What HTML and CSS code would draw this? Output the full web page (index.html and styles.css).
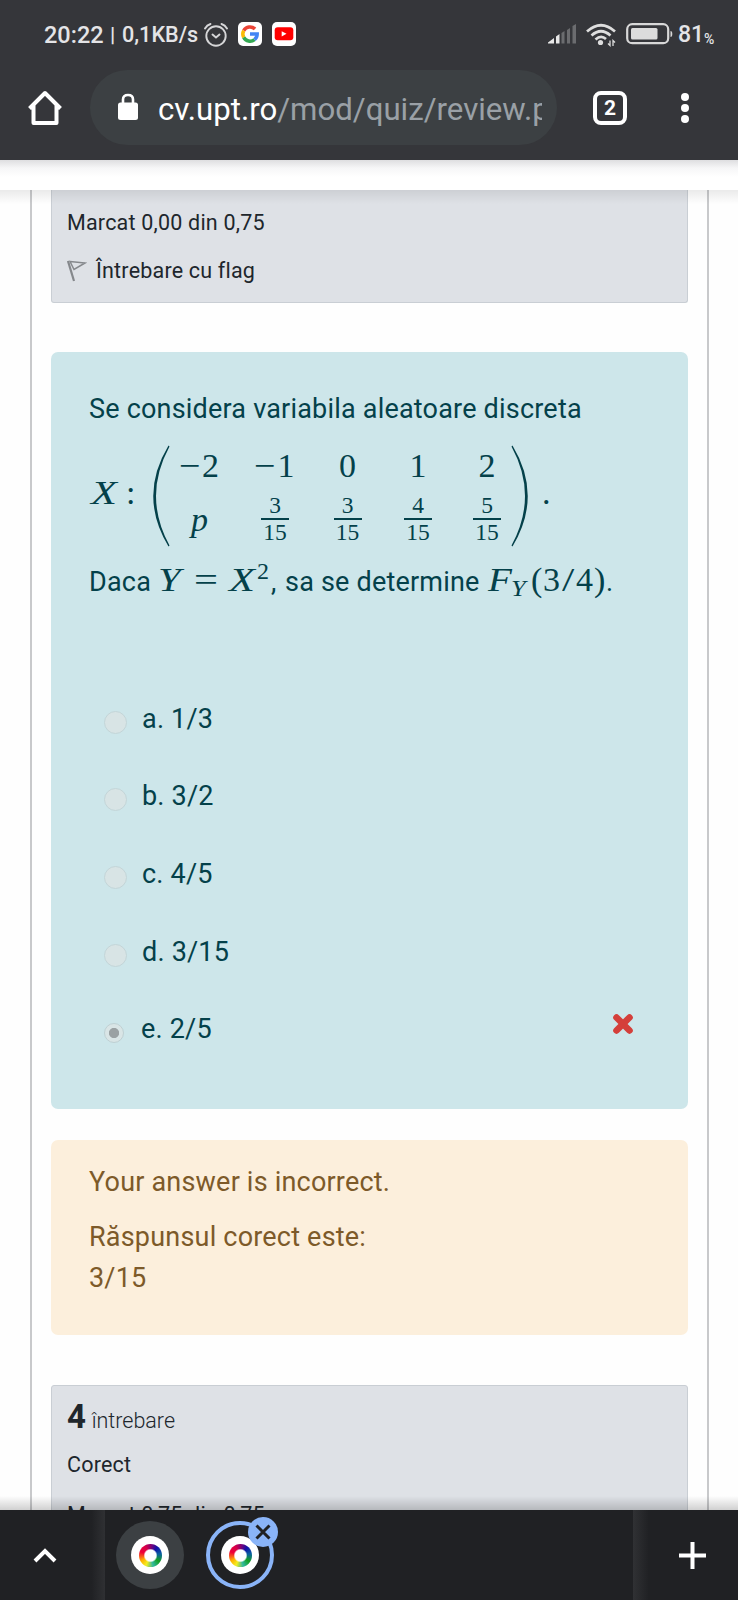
FILE: index.html
```
<!DOCTYPE html>
<html lang="ro">
<head>
<meta charset="utf-8">
<title>Quiz review</title>
<link rel="stylesheet" href="styles.css">
</head>
<body>
<div class="screen">
  <header class="chrome">
    <div class="status">
      <span class="clock">20:22</span><span class="sep">|</span><span class="speed">0,1KB/s</span>
      <svg class="alarm" width="24" height="26" viewBox="0 0 24 26" fill="none" stroke="#d6d6d8" stroke-width="1.9" stroke-linecap="round"><circle cx="12" cy="14" r="9.7"/><path d="M1 6.5Q3 3 6.500 2M23 6.500Q21 3 17.500 2M8.500 12.500L12 15.500L15.500 12.500"/></svg>
      <svg class="google" width="24" height="24" viewBox="0 0 24 24"><rect width="24" height="24" rx="5" fill="#fff"/><g fill="none" stroke-width="3.500"><path d="M5.700 8.600A7.200 7.200 0 0 1 17 7" stroke="#ea4335"/><path d="M5.700 15.400A7.200 7.200 0 0 1 5.700 8.600" stroke="#fbbc05"/><path d="M16.500 17.600A7.200 7.200 0 0 1 5.700 15.400" stroke="#34a853"/><path d="M12 12H19.200A7.200 7.200 0 0 1 16.500 17.600" stroke="#4285f4"/></g></svg>
      <svg class="youtube" width="24" height="24" viewBox="0 0 24 24"><rect width="24" height="24" rx="5" fill="#fff"/><rect x="2.700" y="5.300" width="18.600" height="13" rx="3" fill="#f00"/><path d="M9.700 9.200V14.400L14.500 11.800Z" fill="#fff"/></svg>
      <svg class="signal" width="29" height="20" viewBox="0 0 29 20"><path d="M0 19.500V18.500L6 14V19.500Z M8 19.500V12.500L11.500 10V19.500Z" fill="#e8e8e8"/><path d="M13.500 19.500V9L16.500 7V19.500Z M19 19.500V6L22 4V19.500Z M24.500 19.500V2L28 0V19.500Z" fill="#6b6c6f"/></svg>
      <svg class="wifi" width="30" height="24" viewBox="0 0 30 24" fill="none" stroke="#dedede" stroke-width="2.700"><path d="M1 8.500Q15 -4 29 8.500M5.500 12.500Q15 4 24.500 12.500M9.500 16.500Q15 11.500 20 16"/><circle cx="14.500" cy="19.500" r="2.600" fill="#dedede" stroke="none"/><path d="M24 17.500V22.500L22 20.500M27 23V17.500L29 19.500" stroke-width="1.300"/></svg>
      <svg class="battery" width="47" height="22" viewBox="0 0 47 22"><rect x="1.200" y="1.200" width="41" height="19" rx="5" fill="none" stroke="#d8d8d8" stroke-width="2.200"/><rect x="5" y="5" width="26.500" height="11.500" rx="1.500" fill="#dcdcdc"/><path d="M44.500 8Q46.300 8 46.300 11T44.500 14Z" fill="#d8d8d8"/></svg>
      <span class="level">81</span><span class="pct">%</span>
    </div>
    <div class="toolbar">
      <svg class="home" width="36" height="36" viewBox="0 0 36 36" fill="none" stroke="#fff" stroke-width="4" stroke-linejoin="round"><path d="M2.500 18.500L18 3L33.500 18.500M6.500 15.500V33H29.500V15.500"/></svg>
      <div class="omnibox">
        <svg width="20" height="28" viewBox="0 0 20 28"><rect y="9.500" width="20" height="17.500" rx="2.500" fill="#fff"/><path d="M5 11V6.500Q5 2 10 2T15 6.500V11" fill="none" stroke="#fff" stroke-width="2.600"/></svg>
        <div class="url">cv.upt.ro<span>/mod/quiz/review.p</span></div>
      </div>
      <div class="tabs">2</div>
      <div class="menu"><i></i><i></i><i></i></div>
    </div>
  </header>
  <div class="topstrip"></div>
  <main class="viewport">
    <div class="frame">
      <section class="info first">
        <p>Marcat 0,00 din 0,75</p>
        <p class="flagrow"><svg width="20" height="22" viewBox="0 0 20 22" fill="none" stroke="#85888c"><path d="M1 1L7 21" stroke-width="2.200"/><path d="M3 1.500L18 3L7 9.500Z" stroke-width="1.500"/></svg>Întrebare cu flag</p>
      </section>
      <section class="question">
        <p class="lead">Se considera variabila aleatoare discreta</p>
        <div class="formula">
          <span class="wide v">X</span><span class="colon">:</span>
          <svg class="paren" width="18" height="102" viewBox="0 0 18 102"><path d="M16.500 .5Q-14 51 16.500 101.500L17.500 100.500Q-9.500 51 17.500 1.500Z" fill="#04414a"/></svg>
          <div class="matrix">
            <span><b class="minus">−</b>2</span><span><b class="minus">−</b>1</span><span>0</span><span>1</span><span>2</span>
            <span class="v p">p</span>
            <span class="frac"><b>3</b><b>15</b></span><span class="frac"><b>3</b><b>15</b></span><span class="frac"><b>4</b><b>15</b></span><span class="frac"><b>5</b><b>15</b></span>
          </div>
          <svg class="paren" width="18" height="102" viewBox="0 0 18 102"><path d="M1.500 .5Q32 51 1.500 101.500L.5 100.500Q27.500 51 .5 1.500Z" fill="#04414a"/></svg>
          <span class="stop">.</span>
        </div>
        <div class="then">
          <span class="t daca">Daca</span><span class="m v y">Y</span><span class="m eq">=</span><span class="m v x">X</span><span class="m sup">2</span><span class="t comma">,</span><span class="t det">sa se determine</span><span class="m v f">F</span><span class="m v sub">Y</span><span class="m lp">(</span><span class="m three">3</span><span class="m sl">/</span><span class="m four">4</span><span class="m rp">)</span><span class="t end">.</span>
        </div>
        <ul class="answers">
          <li><i></i>a. 1/3</li>
          <li><i></i>b. 3/2</li>
          <li><i></i>c. 4/5</li>
          <li><i></i>d. 3/15</li>
          <li class="chosen"><i></i>e. 2/5<svg width="20" height="20" viewBox="0 0 20 20"><path d="M3.500 3.500L16.500 16.500M16.500 3.500L3.500 16.500" stroke="#d43f3a" stroke-width="6.600" stroke-linecap="round"/></svg></li>
        </ul>
      </section>
      <section class="feedback">
        <p>Your answer is incorrect.</p>
        <p class="right">Răspunsul corect este:<br>3/15</p>
      </section>
      <section class="info next">
        <p class="no"><b>4</b> <span>întrebare</span></p>
        <p>Corect</p>
        <p class="mark">Marcat 0,75 din 0,75</p>
      </section>
    </div>
  </main>
  <footer class="tabstrip">
    <div class="up"><svg width="24" height="15" viewBox="0 0 24 15" fill="none" stroke="#fff" stroke-width="4"><path d="M2 13L12 3L22 13"/></svg></div>
    <div class="groups">
      <div class="tab"><div class="fav"><i></i></div></div>
      <div class="tab active"><div class="fav"><i></i></div>
        <svg class="close" width="30" height="30" viewBox="0 0 30 30"><circle cx="15" cy="15" r="15" fill="#8ab4f8"/><path d="M8.500 8.500L21.500 21.500M21.500 8.500L8.500 21.500" stroke="#202124" stroke-width="3"/></svg>
      </div>
    </div>
    <div class="add"><svg width="27" height="27" viewBox="0 0 27 27" stroke="#fff" stroke-width="4"><path d="M0 13.500H27M13.500 0V27"/></svg></div>
  </footer>
</div>
</body>
</html>
```
FILE: styles.css
```
* { box-sizing: border-box; }
body { margin: 0; font-family: Roboto, "Liberation Sans", sans-serif; background: #fff; }
p, ul { margin: 0; padding: 0; list-style: none; }
svg { display: block; flex: none; }
.screen { width: 738px; height: 1600px; display: flex; flex-direction: column; overflow: hidden; }

.chrome { height: 160px; background: #35363a; flex: none; }
.status { height: 70px; padding: 0 0 0 44px; display: flex; align-items: center; color: #e4e4e6; font-weight: 500; line-height: 70px; white-space: nowrap; }
.clock { font-size: 23.500px; width: 62px; }
.sep { font-size: 21px; font-weight: 500; width: 16px; text-align: left; padding-left: 4px; }
.speed { font-size: 21.600px; width: 77px; }
.alarm { margin: -1px 0 0 5px; }
.google { margin: -3px 0 0 10px; }
.youtube { margin: -3px 0 0 10px; }
.signal { margin: -3px 0 0 252px; }
.wifi { margin: -1px 0 0 9px; }
.battery { margin: -3px 0 0 10px; }
.level { font-size: 23px; margin-left: 5px; width: 26px; }
.pct { font-size: 14px; padding-top: 7px; }

.toolbar { height: 75px; display: flex; align-items: center; padding-left: 27px; }
.omnibox { width: 467px; height: 75px; margin-left: 27px; border-radius: 38px; background: #3c4043; display: flex; align-items: center; padding: 0 15px 0 28px; }
.omnibox svg { margin-top: -1px; }
.url { margin-left: 20px; flex: 1; overflow: hidden; white-space: nowrap; font-size: 31.200px; line-height: 44px; color: #fff; padding-top: 4px; }
.url span { color: #9aa0a6; }
.tabs { margin-left: 36px; width: 34px; height: 34px; border: 4px solid #fff; border-radius: 8px; color: #fff; font-weight: 700; font-size: 21px; line-height: 27px; text-align: center; }
.menu { margin-left: 54px; display: flex; flex-direction: column; gap: 3px; }
.menu i { width: 8px; height: 8px; border-radius: 50%; background: #fff; }

.topstrip { height: 30px; flex: none; background: linear-gradient(#dedee0, #f6f6f7 8px, #fff 17px); }
.viewport { height: 1320px; flex: none; overflow: hidden; position: relative; background: #fefefe; }
.viewport::before, .viewport::after { content: ""; position: absolute; left: 0; right: 0; height: 14px; z-index: 2; }
.viewport::before { top: 0; background: linear-gradient(rgba(0,0,0,.08), rgba(0,0,0,0)); }
.viewport::after { bottom: 0; background: linear-gradient(rgba(0,0,0,0), rgba(0,0,0,.18)); }
.frame { margin: 0 29px 0 30px; border: 2px solid #c8c9cb; border-width: 0 2px; padding: 0 19px; height: 1320px; }

.info { background: #dee1e6; border: 1px solid #c9ced4; color: #20262c; font-size: 21.500px; letter-spacing: .2px; padding: 0 15px; border-radius: 3px; }
.first { height: 113px; border-top: 0; border-radius: 0 0 3px 3px; padding-top: 16px; }
.info p { line-height: 33px; }
.first .flagrow { margin-top: 15px; display: flex; align-items: center; }
.flagrow svg { margin-right: 9px; }

.question { margin-top: 49px; height: 757px; background: #cde6ea; border-radius: 7px; color: #04414a; padding: 37px 37px 0 38px; font-size: 27px; letter-spacing: .2px; }
.lead { line-height: 40px; white-space: nowrap; }
.formula { height: 130px; display: flex; padding-top: 16px; font-family: "Liberation Serif", serif; font-size: 34px; line-height: 34px; white-space: nowrap; letter-spacing: 0; }
.v { font-style: italic; }
.wide { width: 22px; margin: 31px 0 0 2px; transform: scaleX(1.25); transform-origin: left; }
.colon { width: 12px; margin: 31px 13px 0 13px; }
.paren { margin-left: 1px; }
.matrix { display: grid; grid-template-columns: 79px 72px 73px 68px 70px; grid-template-rows: 44px 58px; width: 362px; margin-left: -10px; margin-right: -12px; }
.matrix > span { text-align: center; padding-top: 4px; }
.matrix b { font-weight: 400; }
.minus { display: inline-block; transform: scaleX(1.12); margin-right: 3px; }
.matrix .p { padding-top: 14px; }
.matrix .frac { display: flex; flex-direction: column; align-items: center; font-size: 23.500px; line-height: 25px; padding-top: 4px; }
.frac b:last-child { width: 28px; border-top: 2px solid #04414a; margin-top: 0; line-height: 25px; }
.stop { margin: 31px 0 0 13px; }

.then { height: 42px; display: flex; align-items: baseline; white-space: nowrap; line-height: 42px; }
.m { font-family: "Liberation Serif", serif; font-size: 34px; line-height: 42px; transform-origin: left; letter-spacing: 0; }
.daca { width: 69px; }
.y { width: 36px; transform: scaleX(1.2); }
.eq { width: 35px; transform: scaleX(1.25); }
.x { width: 28px; transform: scaleX(1.25); }
.sup { width: 14px; font-size: 24px; position: relative; top: -12px; }
.comma { width: 14px; }
.det { width: 203px; }
.f { width: 23px; transform: scaleX(1.15); }
.sub { width: 20px; font-size: 24px; position: relative; top: 5px; transform: scaleX(1.1); }
.lp { width: 12px; }
.three { width: 19px; }
.sl { width: 14px; transform: scaleX(1.3); }
.four { width: 18px; }
.rp { width: 12px; }

.answers { margin-top: 79px; padding-left: 15px; }
.answers li { height: 77.600px; display: flex; align-items: center; line-height: 40px; }
.answers i { width: 23px; height: 23px; border-radius: 50%; border: 1px solid #c3d5d8; background: #d8e4e5; margin: 7px 15px 0 0; }
.answers .chosen i { width: 20px; height: 20px; border-color: #bfd0d3; background: radial-gradient(circle, #9aa1a3 0 4.700px, #d9e5e6 5.500px); margin-right: 17px; }
.answers svg { margin: -10px 18px 0 auto; }

.feedback { margin-top: 31px; height: 195px; background: #fcefdc; border-radius: 7px; color: #7d5a29; padding: 22px 38px; font-size: 27px; line-height: 41px; letter-spacing: .2px; }
.feedback .right { margin-top: 14px; line-height: 41px; }
.next { margin-top: 50px; height: 200px; }
.next .no { margin-top: 14px; line-height: 34px; }
.no b { font-size: 33px; font-weight: 700; }
.no span { font-weight: 300; letter-spacing: 0; }
.next p + p { margin-top: 10px; }
.next p + .mark { margin-top: 17px; }

.tabstrip { height: 90px; flex: none; background: #202124; display: flex; }
.up { width: 105px; background: linear-gradient(90deg, #202124 87%, #2f3033); display: flex; align-items: center; padding-left: 33px; }
.groups { width: 528px; display: flex; align-items: center; padding-left: 11px; gap: 22px; }
.tab { width: 68px; height: 68px; border-radius: 50%; background: #3c4043; display: flex; align-items: center; justify-content: center; position: relative; }
.active { background: #202124; border: 4px solid #8ab4f8; }
.fav { width: 38px; height: 38px; border-radius: 50%; background: #fff; display: flex; align-items: center; justify-content: center; }
.fav i { width: 23px; height: 23px; border-radius: 50%; background: radial-gradient(circle, #fff 0 5.500px, transparent 7px), conic-gradient(#8a0070, #1010a8 40deg, #0a60a0 80deg, #12a020 125deg, #30b8a0 165deg, #f4ee20 205deg, #ffb000 240deg, #f00038 290deg, #d80048 330deg, #8a0070); }
.close { position: absolute; right: -8px; top: -8px; }
.add { flex: 1; background: linear-gradient(90deg, #303134, #202124 15%); display: flex; align-items: center; padding-left: 46px; }
```
